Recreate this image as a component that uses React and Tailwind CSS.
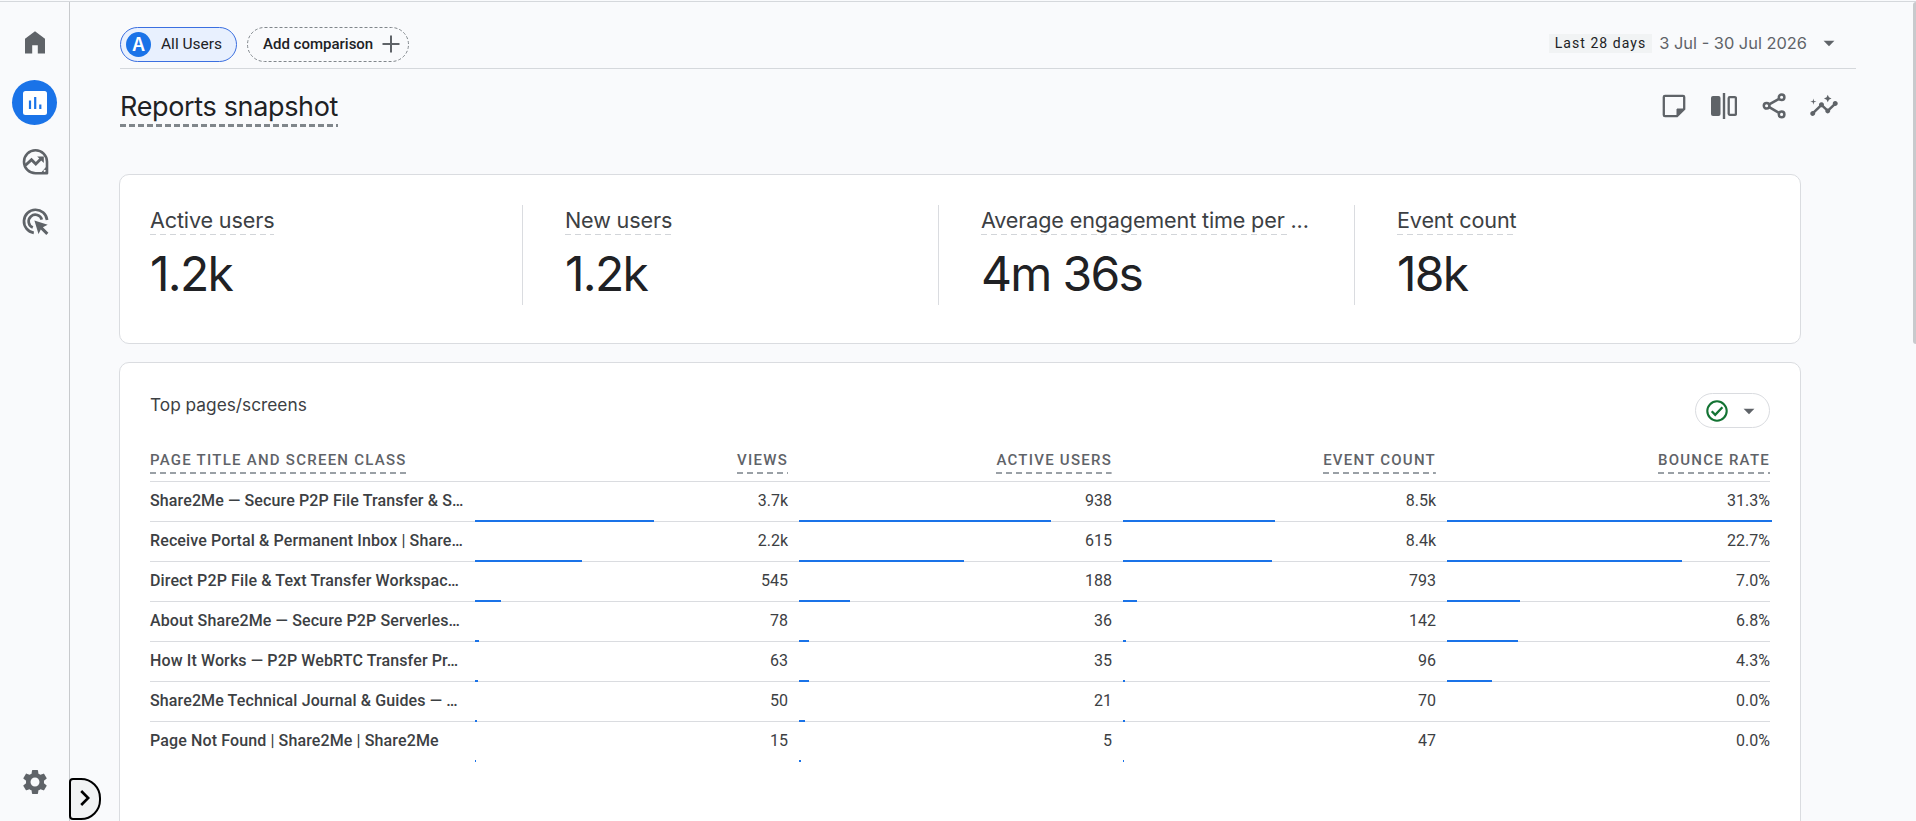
import React from 'react';
import { MdSettings, MdArrowDropDown, MdInsights } from 'react-icons/md';

const metrics = [
  { label: 'Active users', value: '1.2k' },
  { label: 'New users', value: '1.2k' },
  { label: 'Average engagement time per ', value: '4m 36s', clipped: true },
  { label: 'Event count', value: '18k' },
];

const columns = ['VIEWS', 'ACTIVE USERS', 'EVENT COUNT', 'BOUNCE RATE'];

// each cell is [value, bar width in px]
const rows = [
  { title: 'Share2Me — Secure P2P File Transfer & S…', cells: [['3.7k', 179], ['938', 252], ['8.5k', 152], ['31.3%', 325]] },
  { title: 'Receive Portal & Permanent Inbox | Share…', cells: [['2.2k', 107], ['615', 165], ['8.4k', 149], ['22.7%', 235]] },
  { title: 'Direct P2P File & Text Transfer Workspac…', cells: [['545', 26], ['188', 51], ['793', 14], ['7.0%', 73]] },
  { title: 'About Share2Me — Secure P2P Serverles…', cells: [['78', 4], ['36', 10], ['142', 3], ['6.8%', 71]] },
  { title: 'How It Works — P2P WebRTC Transfer Pr…', cells: [['63', 3], ['35', 10], ['96', 2], ['4.3%', 45]] },
  { title: 'Share2Me Technical Journal & Guides — …', cells: [['50', 2], ['21', 6], ['70', 2], ['0.0%', 0]] },
  { title: 'Page Not Found | Share2Me | Share2Me', cells: [['15', 1], ['5', 2], ['47', 1], ['0.0%', 0]] },
];

// dashed rule that takes the width of the text above it
const Dashes = ({ color, dash, gap, height }) => (
  <svg className="w-0 min-w-full shrink-0" height={height} aria-hidden="true">
    <line x1="0" y1={height / 2} x2="100%" y2={height / 2} stroke={color} strokeWidth={height} strokeDasharray={`${dash} ${gap}`} />
  </svg>
);

const HomeIcon = () => (
  <svg width="20" height="23" viewBox="0 0 20 23" fill="#5f6368">
    <path d="M0 22.5V7.8L10 .3l10 7.5v14.7h-7.2v-8.3H7.2v8.3z" />
  </svg>
);

const ReportsIcon = () => (
  <svg width="24" height="24" viewBox="0 0 24 24" fill="none">
    <rect width="24" height="24" rx="2.5" fill="#fff" />
    <path d="M7 9.5V18M12.2 6v12M17.3 13.5V18" stroke="#1a73e8" strokeWidth="2.2" />
  </svg>
);

const ExploreIcon = () => (
  <svg width="27" height="27" viewBox="0 0 27 27" fill="none" stroke="#5f6368">
    <path d="M25 25.2H13.5A11.5 11.5 0 1 1 25 13.7z" strokeWidth="2.6" strokeLinejoin="round" />
    <path d="M19.5 25.2 25 19v6.2z" fill="#5f6368" strokeWidth="1.5" />
    <circle cx="22.6" cy="22.8" r="1.1" fill="#fff" stroke="none" />
    <path d="m3.5 17.3 6-5.6 4.3 4.3 6.2-6.2" strokeWidth="2.9" />
    <path d="M15.2 8.4h6.6V15z" fill="#5f6368" stroke="none" />
  </svg>
);

const AdvertisingIcon = () => (
  <svg width="27" height="27" viewBox="0 0 27 27" fill="none" stroke="#5f6368" strokeWidth="2.7">
    <path d="M11.8 24.8A11.6 11.6 0 1 1 25.1 12" />
    <path d="M10.8 19.6A6.7 6.7 0 1 1 19.8 11.6" />
    <path d="m12.4 12.4 13.3 4.4-4.8 2.5 5.5 5.5-2.1 2.1-5.5-5.5-2.3 4.7z" fill="#5f6368" stroke="none" />
  </svg>
);

const NoteIcon = () => (
  <svg width="24" height="24" viewBox="0 0 24 24" fill="none" stroke="#5f6368" strokeWidth="2.3">
    <path d="M3 1.8h18q1.2 0 1.2 1.2v12l-7.2 7.2H3q-1.2 0-1.2-1.2V3Q1.8 1.8 3 1.8z" />
    <path d="M15 22v-7h7z" fill="#5f6368" strokeWidth="1" />
  </svg>
);

const CompareIcon = () => (
  <svg width="26" height="26" viewBox="0 0 26 26" fill="none">
    <rect x="0" y="3" width="9.5" height="20" rx="2" fill="#5f6368" />
    <path d="M13 0v26" stroke="#5f6368" strokeWidth="2.4" />
    <rect x="17.7" y="4.2" width="7.2" height="17.6" rx="1" stroke="#5f6368" strokeWidth="2.3" />
  </svg>
);

const ShareIcon = () => (
  <svg width="24" height="26" viewBox="0 0 24 26" fill="none" stroke="#5f6368" strokeWidth="2.5">
    <circle cx="19.6" cy="4.3" r="2.8" />
    <circle cx="4.6" cy="12.8" r="2.8" />
    <circle cx="19.6" cy="21.4" r="2.8" />
    <path d="M7.2 11.4 17 5.8M7.2 14.2l9.8 5.7" />
  </svg>
);

const CheckIcon = () => (
  <svg width="22" height="22" viewBox="0 0 22 22" fill="none" stroke="#137333">
    <circle cx="11" cy="11" r="9.7" strokeWidth="2.1" />
    <path d="m5.7 11.3 3.5 3.5 7.2-7.6" strokeWidth="2.3" />
  </svg>
);

const Sidebar = () => (
  <nav className="flex w-[70px] shrink-0 flex-col items-center border-r border-[#c8cacd] pt-[29px] pl-px text-[#5f6368]">
    <HomeIcon />
    <div className="mt-[26px] mr-px flex size-[45px] items-center justify-center rounded-full bg-[#1a73e8]">
      <ReportsIcon />
    </div>
    <div className="mt-[23px]">
      <ExploreIcon />
    </div>
    <div className="mt-[33px]">
      <AdvertisingIcon />
    </div>
    <MdSettings size={30} className="mt-auto mb-6" />
  </nav>
);

const Toolbar = () => (
  <div className="flex h-[67px] w-[1736px] items-start border-b border-[#d5d8dc] pt-[25px]">
    <div className="flex h-[35px] w-[117px] items-center rounded-full border border-[#3b6fe0] bg-[#e8f0fe] pl-[5px]">
      <span className="flex size-[25px] items-center justify-center rounded-full bg-[#1a73e8] font-['Inter',sans-serif] text-[18px] font-semibold text-white">A</span>
      <span className="ml-[10px] pt-px text-[15.5px] text-[#202124]">All Users</span>
    </div>
    <div className="relative ml-[10px] flex h-[35px] w-[162px] items-center pl-4">
      <svg className="absolute inset-0" width="162" height="35" fill="none">
        <rect x="0.5" y="0.5" width="161" height="34" rx="17" stroke="#80868b" strokeDasharray="3 2" />
      </svg>
      <span className="pb-px text-[15px] font-medium text-[#202124]">Add comparison</span>
      <svg className="mb-px ml-[9px]" width="18" height="18" viewBox="0 0 18 18" stroke="#5f6368" strokeWidth="2">
        <path d="M9 .5v17M.5 9h17" />
      </svg>
    </div>
    <div className="ml-auto flex items-center pt-[3px] pr-[14px]">
      <span className="bg-[#f1f3f4] px-[6px] text-[14px] leading-[19px] tracking-[1.05px] text-[#202124]">Last 28 days</span>
      <span className="ml-[7px] font-['Inter',sans-serif] text-[16.4px] text-[#5f6368]">3 Jul - 30 Jul 2026</span>
      <MdArrowDropDown size={26} className="ml-[9px] text-[#5f6368]" />
    </div>
  </div>
);

const MetricsCard = () => (
  <section className="-ml-px mt-[46px] flex h-[170px] w-[1682px] rounded-[10px] border border-[#dadce0] bg-white pt-[30px] pl-[30px]">
    {metrics.map((metric, i) => (
      <div
        key={metric.label}
        className={i === 0 ? 'h-[100px] w-[373px] border-r border-[#dadce0]' : i === 3 ? 'h-[100px] w-[416px] pl-[42px]' : 'h-[100px] w-[416px] border-r border-[#dadce0] pl-[42px]'}
      >
        <div className="flex h-[29px] font-['Inter',sans-serif] text-[21.6px] leading-[30px] tracking-[-0.15px] whitespace-pre text-[#3c4043]">
          <span className="flex h-[30px] flex-col">
            <span className="h-[29px]">{metric.label}</span>
            <Dashes color="#d2d5d9" dash={6} gap={4} height={1} />
          </span>
          {metric.clipped && <span>...</span>}
        </div>
        <div className="mt-[10px] font-['Inter',sans-serif] text-[48px] leading-[60px] tracking-[-1.7px] text-[#202124]">{metric.value}</div>
      </div>
    ))}
  </section>
);

const HeaderLabel = ({ children }) => (
  <span className="inline-flex flex-col gap-1">
    {children}
    <Dashes color="#9aa0a6" dash={6} gap={4} height={2} />
  </span>
);

const PagesCard = () => (
  <section className="-ml-px mt-[18px] h-[470px] w-[1682px] rounded-t-[10px] border border-[#dadce0] bg-white px-[30px] pt-[30px]">
    <div className="flex h-[59px] justify-between">
      <h2 className="font-['Inter',sans-serif] text-[17.3px] leading-6 text-[#3c4043]">Top pages/screens</h2>
      <div className="flex h-[35px] w-[75px] items-center rounded-full border border-[#dadce0] pl-[10px]">
        <CheckIcon />
        <MdArrowDropDown size={26} className="ml-2 text-[#5f6368]" />
      </div>
    </div>
    <div className="flex h-[30px] border-b border-[#dadce0] text-[15px] leading-4 font-medium tracking-[1.25px] text-[#5f6368]">
      <div className="w-[325px]">
        <HeaderLabel>PAGE TITLE AND SCREEN CLASS</HeaderLabel>
      </div>
      {columns.map((column, i) => (
        <div key={column} className={i === 3 ? 'w-[323px] text-right' : 'w-[324px] pr-[11px] text-right'}>
          <HeaderLabel>{column}</HeaderLabel>
        </div>
      ))}
    </div>
    {rows.map((row) => (
      <div key={row.title} className="flex h-10 border-b border-[#dadce0] text-[16px] leading-[37px] text-[#3c4043] last:border-b-0">
        <div className="w-[325px] font-medium tracking-[0.12px] whitespace-nowrap">{row.title}</div>
        {row.cells.map(([value, width], i) => (
          <div key={columns[i]} className={i === 3 ? 'flex h-10 w-[323px] flex-col' : 'flex h-10 w-[324px] flex-col'}>
            <span className={i === 3 ? 'h-[38px] text-right' : 'h-[38px] pr-[11px] text-right'}>{value}</span>
            <span className="h-[2px] bg-[#1a73e8]" style={{ width }} />
          </div>
        ))}
      </div>
    ))}
  </section>
);

const App = () => {
  return (
    <div className="bg-[#f9fafc] pt-px">
      <div className="relative flex h-[820px] overflow-hidden border-t border-[#d5d8dc] font-['Roboto',sans-serif]">
        <Sidebar />
        <main className="flex-1 pl-[50px]">
          <Toolbar />
          <div className="flex h-[59px] w-[1720px] justify-between pt-[20px]">
            <h1 className="flex h-10 flex-col font-['Inter',sans-serif] text-[27px] leading-[35px] tracking-[-0.35px] text-[#202124]">
              Reports snapshot
              <Dashes color="#80868b" dash={6} gap={3} height={3} />
            </h1>
            <div className="flex h-[34px] items-center gap-[25px] text-[#5f6368]">
              <NoteIcon />
              <CompareIcon />
              <ShareIcon />
              <MdInsights size={30} className="mr-px -ml-[2px]" />
            </div>
          </div>
          <MetricsCard />
          <PagesCard />
        </main>

        {/* scrollbar thumb */}
        <div className="absolute top-0 right-0 h-[342px] w-[3px] rounded-l bg-[#c8cacd]" />

        {/* expand navigation */}
        <button className="absolute top-[776px] left-[69px] flex h-[42px] w-8 items-center justify-center rounded-l-[4px] rounded-r-[20px] border-2 border-black bg-[#f1f3f4]">
          <svg className="mb-[2px]" width="10" height="16" viewBox="0 0 10 16" fill="none" stroke="#000" strokeWidth="2.6">
            <path d="m1.2 1 7 7-7 7" />
          </svg>
        </button>
      </div>
    </div>
  );
};

export default App;
